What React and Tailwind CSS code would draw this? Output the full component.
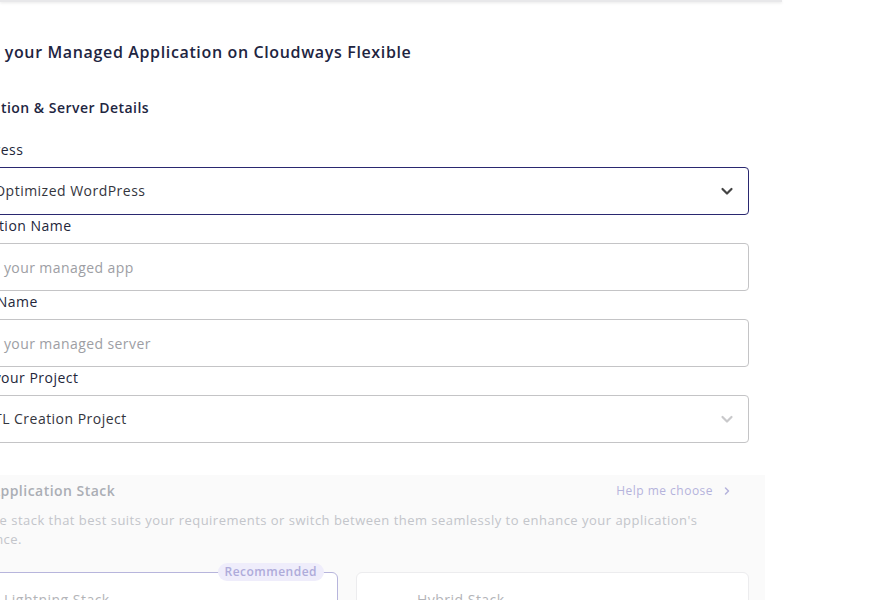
import React from 'react';

function Chevron({ className }) {
  return (
    <svg viewBox="0 0 16 16" className={className} fill="none" stroke="currentColor" strokeWidth="2.2" strokeLinecap="round" strokeLinejoin="round">
      <path d="M3.5 6l4.5 4.5L12.5 6" />
    </svg>
  );
}

function Field({ label, children }) {
  return (
    <div className="flex flex-col">
      <label className="mb-[7px] text-sm leading-5 text-[#23263a]">{label}</label>
      {children}
    </div>
  );
}

function SelectBox({ value, active }) {
  return (
    <div
      className={
        active
          ? 'flex h-12 items-center justify-between rounded border border-[#2a2870] bg-white pl-[20px] pr-[13px]'
          : 'flex h-12 items-center justify-between rounded border border-[#c4c4c6] bg-white pl-[12px] pr-[13px]'
      }
    >
      <span className="text-sm text-[#34353d]">{value}</span>
      <Chevron className={active ? 'h-4 w-4 text-[#444]' : 'h-4 w-4 text-[#c9c9cb]'} />
    </div>
  );
}

function TextBox({ placeholder }) {
  return (
    <input
      placeholder={placeholder}
      className="h-12 rounded border border-[#c4c4c6] bg-white pl-[10px] pr-4 text-sm tracking-[0.03em] text-[#34353d] outline-none placeholder:text-[#9d9ea4]"
    />
  );
}

export default function App() {
  return (
    <div
      className="h-[600px] w-[870px] overflow-hidden bg-white tracking-[0.03em]"
      style={{ fontFamily: '"Open Sans", "Liberation Sans", sans-serif' }}
    >
      <div className="h-[2px] w-[782px] bg-[#e8e8ea] shadow-sm" />

      <div className="-ml-[52px] w-[801px] pt-[38px]">
        <h1 className="-ml-[3px] text-base font-semibold leading-6 tracking-[0.04em] text-[#1e2541]">
          Create your Managed Application on Cloudways Flexible
        </h1>

        <h2 className="mt-[34px] text-sm font-semibold leading-5 text-[#1e2541]">
          Application &amp; Server Details
        </h2>

        <div className="mt-[22px] flex flex-col gap-px">
          <Field label="WordPress">
            <SelectBox value="6.5 Optimized WordPress" active />
          </Field>
          <Field label="Application Name">
            <TextBox placeholder="Name your managed app" />
          </Field>
          <Field label="Server Name">
            <TextBox placeholder="Name your managed server" />
          </Field>
          <Field label="Select your Project">
            <SelectBox value="My ETL Creation Project" />
          </Field>
        </div>

        <section className="-ml-[14px] -mr-4 mt-8 bg-[#fafafa] pb-10 pr-4 pt-[6px]">
          <div className="flex items-center justify-between pr-4">
            <h3 className="text-sm font-semibold leading-5 text-[#abaeb5]">Choose Application Stack</h3>
            <button className="flex items-center gap-2 text-xs text-[#b5b3dc]">
              Help me choose
              <svg viewBox="0 0 16 16" className="h-3 w-3" fill="none" stroke="currentColor" strokeWidth="2" strokeLinecap="round" strokeLinejoin="round">
                <path d="M6 4l4 4-4 4" />
              </svg>
            </button>
          </div>
          <p className="mt-[10px] text-[13px] leading-[19px] text-[#c3c5ca]">
            Choose the stack that best suits your requirements or switch between them seamlessly to enhance your application's
            <br />
            performance.
          </p>

          <div className="mt-[23px] grid grid-cols-[404px_1fr] gap-[18px]">
            <div className="relative h-[90px] rounded-md border border-[#b7b5dc] bg-white">
              <span className="absolute -top-[10px] right-[13px] rounded-full bg-[#efedfb] px-[7px] text-xs font-semibold leading-[18px] text-[#aeabda]">
                Recommended
              </span>
              <div className="pl-[69px] pt-[17px] text-sm text-[#b3b4b8]">Lightning Stack</div>
            </div>
            <div className="h-[90px] rounded-md border border-[#ececee] bg-white">
              <div className="pl-[60px] pt-[17px] text-sm text-[#b3b4b8]">Hybrid Stack</div>
            </div>
          </div>
        </section>
      </div>
    </div>
  );
}
